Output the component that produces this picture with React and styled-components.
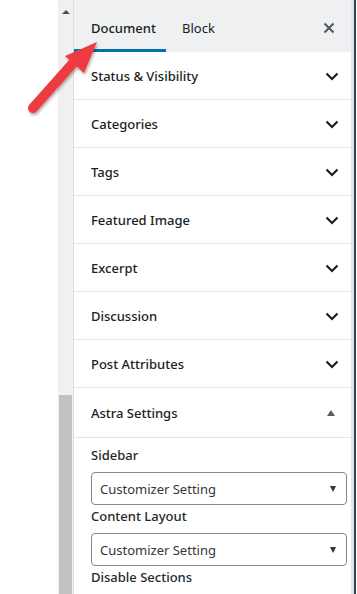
import * as React from "react";
import styled, { createGlobalStyle } from "styled-components";

const GlobalStyle = createGlobalStyle`
  html, body {
    margin: 0;
    padding: 0;
    background: #ffffff;
    font-family: "Noto Sans", "Open Sans", sans-serif;
  }
`;

const sections = [
  "Status & Visibility",
  "Categories",
  "Tags",
  "Featured Image",
  "Excerpt",
  "Discussion",
  "Post Attributes",
];

const Chevron = () => (
  <svg width="14" height="9" viewBox="0 0 14 9">
    <path d="M1.5 1.5 L7 7 L12.5 1.5" fill="none" stroke="#1e1e1e" strokeWidth="2.2" />
  </svg>
);

const CloseIcon = () => (
  <svg width="12" height="12" viewBox="0 0 12 12">
    <path d="M1.5 1.5 L10.5 10.5 M10.5 1.5 L1.5 10.5" stroke="#50575e" strokeWidth="2" />
  </svg>
);

const Arrow = () => (
  <svg width="110" height="130" viewBox="0 0 110 130">
    <defs>
      <filter id="sh" x="-20%" y="-20%" width="140%" height="140%">
        <feDropShadow dx="1" dy="2" stdDeviation="1.5" floodColor="#000" floodOpacity="0.35" />
      </filter>
    </defs>
    <g filter="url(#sh)">
      <line x1="33" y1="108" x2="74" y2="62" stroke="#ee3b41" strokeWidth="10" strokeLinecap="round" />
      <polygon points="97,42 65,56 84,73" fill="#ee3b41" />
    </g>
  </svg>
);

export default function App() {
  return (
    <Page>
      <GlobalStyle />
      <Blank />
      <Scrollbar>
        <ScrollUp />
        <Track />
        <Thumb />
      </Scrollbar>
      <Panel>
        <Header>
          <Tab active>Document</Tab>
          <Tab>Block</Tab>
          <CloseButton>
            <CloseIcon />
          </CloseButton>
        </Header>
        {sections.map((s) => (
          <Row key={s}>
            <RowTitle>{s}</RowTitle>
            <Chevron />
          </Row>
        ))}
        <Row tall>
          <RowTitle>Astra Settings</RowTitle>
          <Caret up />
        </Row>
        <Settings>
          <Label>Sidebar</Label>
          <Select>
            <span>Customizer Setting</span>
            <Caret />
          </Select>
          <Label>Content Layout</Label>
          <Select>
            <span>Customizer Setting</span>
            <Caret />
          </Select>
          <Label>Disable Sections</Label>
        </Settings>
      </Panel>
      <Edge />
      <ArrowWrap>
        <Arrow />
      </ArrowWrap>
    </Page>
  );
}

const Page = styled.div`
  position: relative;
  display: flex;
  width: 357px;
  height: 594px;
  overflow: hidden;
  background: #ffffff;
`;

const Blank = styled.div`
  width: 58px;
  flex-shrink: 0;
`;

const Scrollbar = styled.div`
  width: 16px;
  flex-shrink: 0;
  display: flex;
  flex-direction: column;
  background: #f0f0f0;
  border-right: 1px solid #e0e0e0;
  box-sizing: border-box;
  padding: 0 1px;
`;

const ScrollUp = styled.div`
  height: 24px;
  display: flex;
  align-items: center;
  justify-content: center;
  &::after {
    content: "";
    border-left: 4px solid transparent;
    border-right: 4px solid transparent;
    border-bottom: 4px solid #505050;
  }
`;

const Track = styled.div`
  height: 371px;
`;

const Thumb = styled.div`
  flex: 1;
  background: #c1c1c1;
`;

const Panel = styled.div`
  width: 277px;
  flex-shrink: 0;
  display: flex;
  flex-direction: column;
  border-right: 1px solid #e2e4e7;
  background: #ffffff;
`;

const Header = styled.div`
  height: 52px;
  flex-shrink: 0;
  display: flex;
  align-items: stretch;
  background: #eef0f2;
  box-sizing: border-box;
`;

const Tab = styled.div`
  display: flex;
  align-items: center;
  padding: 6px 16px 0;
  font-size: 13px;
  font-weight: ${(p) => (p.active ? 500 : 400)};
  color: #191e23;
  border-bottom: 3px solid ${(p) => (p.active ? "#0073aa" : "transparent")};
  &:first-child {
    padding: 6px 16px 0 17px;
    width: 92px;
    box-sizing: border-box;
  }
`;

const CloseButton = styled.div`
  margin-left: auto;
  width: 36px;
  display: flex;
  align-items: center;
  justify-content: center;
  padding-right: 4px;
  padding-top: 4px;
`;

const Row = styled.div`
  height: ${(p) => (p.tall ? 50 : 48)}px;
  box-sizing: border-box;
  flex-shrink: 0;
  display: flex;
  align-items: center;
  justify-content: space-between;
  padding: 1px 12px 0 17px;
  border-bottom: 1px solid #e2e4e7;
`;

const RowTitle = styled.span`
  font-size: 13px;
  font-weight: 500;
  color: #191e23;
`;

const Caret = styled.span`
  width: 0;
  height: 0;
  margin-right: ${(p) => (p.up ? 4 : 0)}px;
  border-left: ${(p) => (p.up ? 4 : 3)}px solid transparent;
  border-right: ${(p) => (p.up ? 4 : 3)}px solid transparent;
  ${(p) =>
    p.up ? "border-bottom: 6px solid #555d66;" : "border-top: 6px solid #32373c;"}
`;

const Settings = styled.div`
  display: flex;
  flex-direction: column;
  padding: 8px 4px 0 17px;
`;

const Label = styled.div`
  font-size: 13px;
  font-weight: 500;
  color: #23282d;
  line-height: 18px;
  margin-bottom: 8px;
`;

const Select = styled.div`
  height: 33px;
  box-sizing: border-box;
  display: flex;
  align-items: center;
  justify-content: space-between;
  padding: 0 10px 0 8px;
  border: 1px solid #7e8993;
  border-radius: 4px;
  font-size: 13px;
  color: #32373c;
  margin-bottom: 2px;
`;

const Edge = styled.div`
  flex: 1;
  border-left: 2px solid #e4e4e4;
  border-right: 1px solid #ffffff;
  background: #2d3f66;
`;

const ArrowWrap = styled.div`
  position: absolute;
  left: 0;
  top: 0;
`;
